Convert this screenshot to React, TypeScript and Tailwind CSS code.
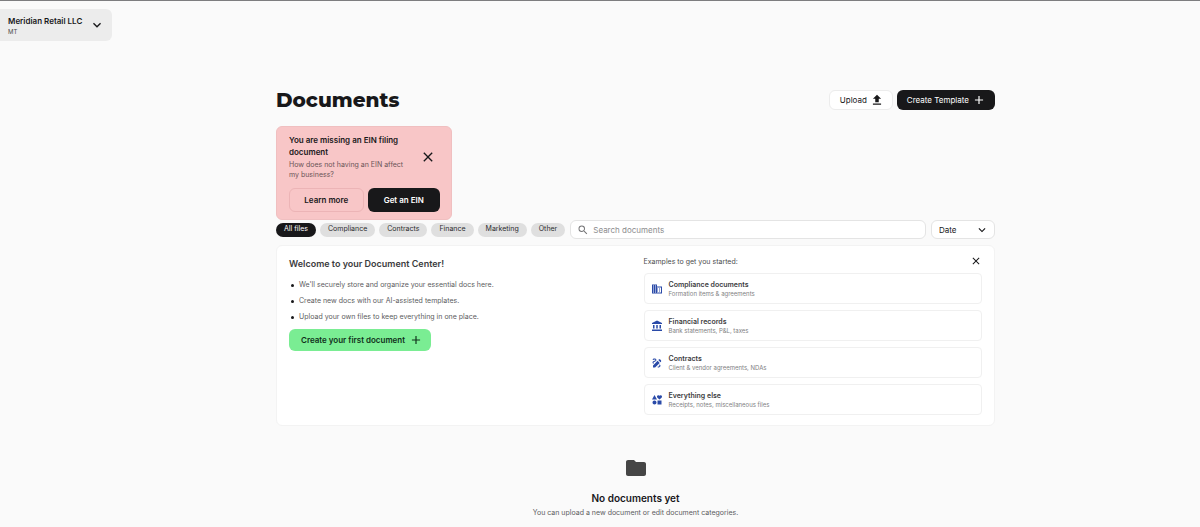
import React, { useState } from 'react';
import type { IconType } from 'react-icons';
import {
  MdAccountBalance,
  MdAdd,
  MdClose,
  MdDomain,
  MdDraw,
  MdExpandMore,
  MdFolder,
  MdInterests,
  MdSearch,
  MdUpload,
} from 'react-icons/md';

const CATEGORIES = ['All files', 'Compliance', 'Contracts', 'Finance', 'Marketing', 'Other'];

const TIPS = [
  "We'll securely store and organize your essential docs here.",
  'Create new docs with our AI-assisted templates.',
  'Upload your own files to keep everything in one place.',
];

interface Example {
  title: string;
  description: string;
  icon: IconType;
}

const EXAMPLES: Example[] = [
  { title: 'Compliance documents', description: 'Formation items & agreements', icon: MdDomain },
  { title: 'Financial records', description: 'Bank statements, P&L, taxes', icon: MdAccountBalance },
  { title: 'Contracts', description: 'Client & vendor agreements, NDAs', icon: MdDraw },
  { title: 'Everything else', description: 'Receipts, notes, miscellaneous files', icon: MdInterests },
];

/** Company switcher in the top left corner */
const CompanySwitcher: React.FC = () => (
  <button
    type="button"
    className="flex h-8 w-28 items-center justify-between rounded-r-md bg-[#ececec] pr-[7px] pl-2 text-left"
  >
    <span className="flex flex-col pt-0.5">
      <span className="text-[8px] leading-3 font-semibold whitespace-nowrap text-[#18181a]">Meridian Retail LLC</span>
      <span className="text-[6px] leading-[10px] text-[#4a4a4a]">MT</span>
    </span>
    <MdExpandMore className="size-4 text-[#18181a]" />
  </button>
);

/** Warning shown while the EIN document is missing */
const EinAlert: React.FC<{ onClose: () => void }> = ({ onClose }) => (
  <section className="w-44 rounded-md border border-[#f0bfc0] bg-[#f8c6c7] py-[7px] pr-[11px] pl-3">
    <div className="flex items-center justify-between">
      <div className="w-[120px]">
        <h2 className="text-[8px] leading-3 font-semibold text-[#18181a]">You are missing an EIN filing document</h2>
        <p className="mt-0.5 text-[7px] leading-[10px] text-[#6b5557]">
          How does not having an EIN affect my business?
        </p>
      </div>
      <button type="button" aria-label="Dismiss" onClick={onClose} className="mr-1">
        <MdClose className="size-4 text-[#18181a]" />
      </button>
    </div>
    <div className="mt-2 flex gap-1">
      <button
        type="button"
        className="h-6 flex-1 rounded-md border border-[#ecb4b6] text-[8px] font-semibold text-[#18181a]"
      >
        Learn more
      </button>
      <button type="button" className="h-6 flex-1 rounded-md bg-[#18181a] text-[8px] font-semibold text-white">
        Get an EIN
      </button>
    </div>
  </section>
);

const ExampleCard: React.FC<{ example: Example }> = ({ example }) => {
  const Icon = example.icon;

  return (
    <li className="flex h-[31px] items-center gap-[6px] rounded-sm border border-[#f0f0f0] px-[6px]">
      <Icon className="size-3 shrink-0 text-[#2a4aa8]" />
      <div>
        <h3 className="text-[7px] leading-[10px] font-semibold text-[#3c3c3e]">{example.title}</h3>
        <p className="text-[6px] leading-2 text-[#818183]">{example.description}</p>
      </div>
    </li>
  );
};

const DocumentsPage: React.FC = () => {
  const [category, setCategory] = useState('All files');
  const [query, setQuery] = useState('');
  const [showAlert, setShowAlert] = useState(true);
  const [showWelcome, setShowWelcome] = useState(true);

  return (
    <div className="min-h-screen border-t border-[#7d7d7f] bg-[#fafafa] pt-2 font-[Inter,sans-serif] text-[#18181a]">
      <CompanySwitcher />

      <main className="mt-[49px] pl-[71px]">
        <div className="mx-auto max-w-[719px]">
          {/* Title and actions */}
          <header className="flex items-center justify-between">
            <h1 className="font-[Montserrat,Inter,sans-serif] text-[20px] leading-5 font-extrabold">Documents</h1>
            <div className="flex gap-1">
              <button
                type="button"
                className="flex h-5 items-center gap-[3px] rounded-md border border-[#ececec] bg-white pr-2 pl-[10px] text-[8px]"
              >
                Upload
                <MdUpload className="size-[14px]" />
              </button>
              <button
                type="button"
                className="flex h-5 items-center gap-[3px] rounded-md bg-[#18181a] pr-[9px] pl-[10px] text-[8px] text-white"
              >
                Create Template
                <MdAdd className="size-[14px]" />
              </button>
            </div>
          </header>

          <div className="mt-4">{showAlert && <EinAlert onClose={() => setShowAlert(false)} />}</div>

          {/* Filters */}
          <div className="flex items-center gap-[5px]">
            <div className="flex gap-1">
              {CATEGORIES.map((name) => (
                <button
                  key={name}
                  type="button"
                  onClick={() => setCategory(name)}
                  className={`h-[14px] rounded-full px-2 text-[7px] whitespace-nowrap ${
                    name === category ? 'bg-[#18181a] text-white' : 'bg-[#dfdfdf] text-[#2c2c2e]'
                  }`}
                >
                  {name}
                </button>
              ))}
            </div>
            <label className="flex h-[19px] flex-1 items-center gap-1 rounded-md border border-[#e4e4e4] bg-white px-[6px]">
              <MdSearch className="size-3 text-[#757577]" />
              <input
                type="search"
                aria-label="Search documents"
                placeholder="Search documents"
                value={query}
                onChange={(e) => setQuery(e.target.value)}
                className="min-w-0 flex-1 text-[8px] leading-3 outline-none placeholder:text-[#8c8c8e]"
              />
            </label>
            <div className="relative flex items-center">
              <select
                aria-label="Sort by"
                className="h-[19px] w-16 appearance-none rounded-md border border-[#e4e4e4] bg-white pl-[7px] text-[8px]"
              >
                <option>Date</option>
                <option>Name</option>
              </select>
              <MdExpandMore className="pointer-events-none absolute right-[6px] size-[14px]" />
            </div>
          </div>

          {/* Welcome panel */}
          {showWelcome && (
            <section className="mt-[6px] grid grid-cols-2 gap-4 rounded-md border border-[#f3f3f3] bg-white px-3 pt-[9px] pb-[10px]">
              <div>
                <h2 className="mt-[3px] text-[9px] leading-3 font-semibold text-[#3c3c3e]">
                  Welcome to your Document Center!
                </h2>
                <ul className="mt-[7px] mb-1 pl-0.5">
                  {TIPS.map((tip) => (
                    <li
                      key={tip}
                      className="flex items-center gap-[5px] text-[7px] leading-4 text-[#5c5c5e] before:size-[3px] before:rounded-full before:bg-[#18181a]"
                    >
                      {tip}
                    </li>
                  ))}
                </ul>
                <button
                  type="button"
                  className="flex h-[22px] items-center gap-1 rounded-md bg-[#7aed93] pr-2 pl-3 text-[8px] font-semibold text-[#10301a]"
                >
                  Create your first document
                  <MdAdd className="size-[14px]" />
                </button>
              </div>

              <div>
                <div className="flex h-[13px] items-end justify-between">
                  <p className="text-[7px] leading-3 text-[#4c4c4e]">Examples to get you started:</p>
                  <button type="button" aria-label="Close" onClick={() => setShowWelcome(false)} className="self-start">
                    <MdClose className="size-3" />
                  </button>
                </div>
                <ul className="mt-[5px] flex flex-col gap-[6px]">
                  {EXAMPLES.map((example) => (
                    <ExampleCard key={example.title} example={example} />
                  ))}
                </ul>
              </div>
            </section>
          )}

          {/* Empty state */}
          <section className="mt-[30px] flex flex-col items-center text-center">
            <MdFolder className="size-6 text-[#454545]" />
            <h2 className="mt-3 text-[10px] leading-3 font-semibold">No documents yet</h2>
            <p className="mt-1 text-[7px] leading-[10px] text-[#5c5c5e]">
              You can upload a new document or edit document categories.
            </p>
          </section>
        </div>
      </main>
    </div>
  );
};

export default DocumentsPage;
